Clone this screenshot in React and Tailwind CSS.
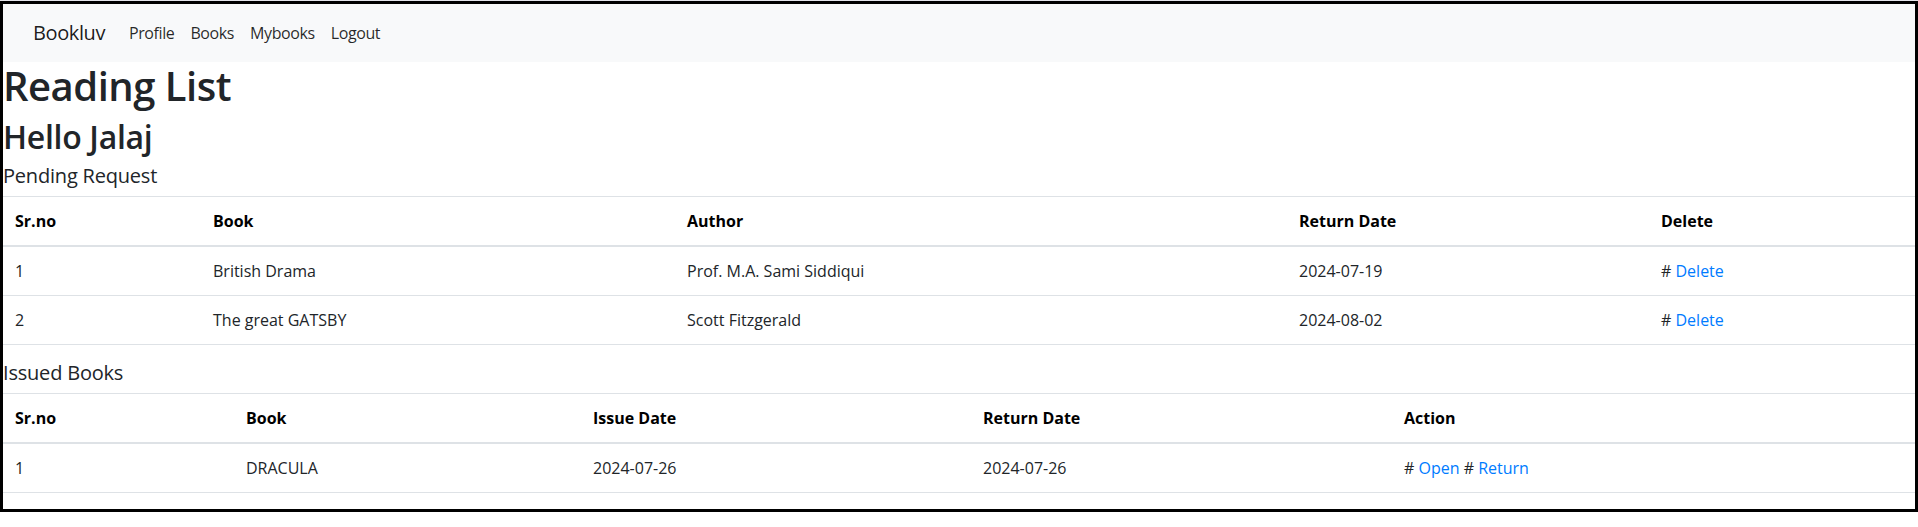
import React from "react";

const pending = [
  { n: "1", book: "British Drama", author: "Prof. M.A. Sami Siddiqui", ret: "2024-07-19" },
  { n: "2", book: "The great GATSBY", author: "Scott Fitzgerald", ret: "2024-08-02" },
];

const issued = [{ n: "1", book: "DRACULA", issue: "2024-07-26", ret: "2024-07-26" }];

function Th({ children }) {
  return (
    <th className="text-left font-bold px-3 py-3 leading-6 border-t border-b-2 border-[#dee2e6] text-black">
      {children}
    </th>
  );
}

function Td({ children }) {
  return <td className="px-3 py-3 leading-6 border-b border-[#dee2e6]">{children}</td>;
}

function Link({ children }) {
  return <a className="text-[#007bff]">{children}</a>;
}

export default function App() {
  return (
    <div className="bg-white font-['Open_Sans','Noto_Sans',sans-serif] text-[#212529] text-base">
      <div className="h-px bg-[#e4e4ea]" />
      <div className="border-[3px] border-black">
        <nav className="h-[58px] bg-[#f8f9fa] flex items-center pl-[30px] tracking-[-0.4px]">
          <span className="text-[20px] leading-[30px] text-black/90 mr-4">Bookluv</span>
          <div className="flex items-center">
            {["Profile", "Books", "Mybooks", "Logout"].map((l) => (
              <span key={l} className="px-2 leading-6 text-black/85">
                {l}
              </span>
            ))}
          </div>
        </nav>
        <h1 className="text-[40px] font-semibold leading-[1.2] mb-2 tracking-[-0.5px]">Reading List</h1>
        <h2 className="text-[32px] font-semibold leading-[1.2] mb-2 tracking-[-0.3px]">Hello Jalaj</h2>
        <h5 className="text-[20px] font-normal leading-[1.2] mb-2 tracking-[-0.2px]">Pending Request</h5>
        <table className="w-full table-fixed border-collapse mb-4">
          <colgroup>
            <col className="w-[198px]" />
            <col className="w-[474px]" />
            <col className="w-[612px]" />
            <col className="w-[362px]" />
            <col />
          </colgroup>
          <thead>
            <tr>
              <Th>Sr.no</Th>
              <Th>Book</Th>
              <Th>Author</Th>
              <Th>Return Date</Th>
              <Th>Delete</Th>
            </tr>
          </thead>
          <tbody>
            {pending.map((r) => (
              <tr key={r.n}>
                <Td>{r.n}</Td>
                <Td>{r.book}</Td>
                <Td>{r.author}</Td>
                <Td>{r.ret}</Td>
                <Td>
                  # <Link>Delete</Link>
                </Td>
              </tr>
            ))}
          </tbody>
        </table>
        <h5 className="text-[20px] font-normal leading-[1.2] mb-2 tracking-[-0.2px]">Issued Books</h5>
        <table className="w-full table-fixed border-collapse mb-4">
          <colgroup>
            <col className="w-[231px]" />
            <col className="w-[347px]" />
            <col className="w-[390px]" />
            <col className="w-[421px]" />
            <col />
          </colgroup>
          <thead>
            <tr>
              <Th>Sr.no</Th>
              <Th>Book</Th>
              <Th>Issue Date</Th>
              <Th>Return Date</Th>
              <Th>Action</Th>
            </tr>
          </thead>
          <tbody>
            {issued.map((r) => (
              <tr key={r.n}>
                <Td>{r.n}</Td>
                <Td>{r.book}</Td>
                <Td>{r.issue}</Td>
                <Td>{r.ret}</Td>
                <Td>
                  # <Link>Open</Link> # <Link>Return</Link>
                </Td>
              </tr>
            ))}
          </tbody>
        </table>
      </div>
    </div>
  );
}
